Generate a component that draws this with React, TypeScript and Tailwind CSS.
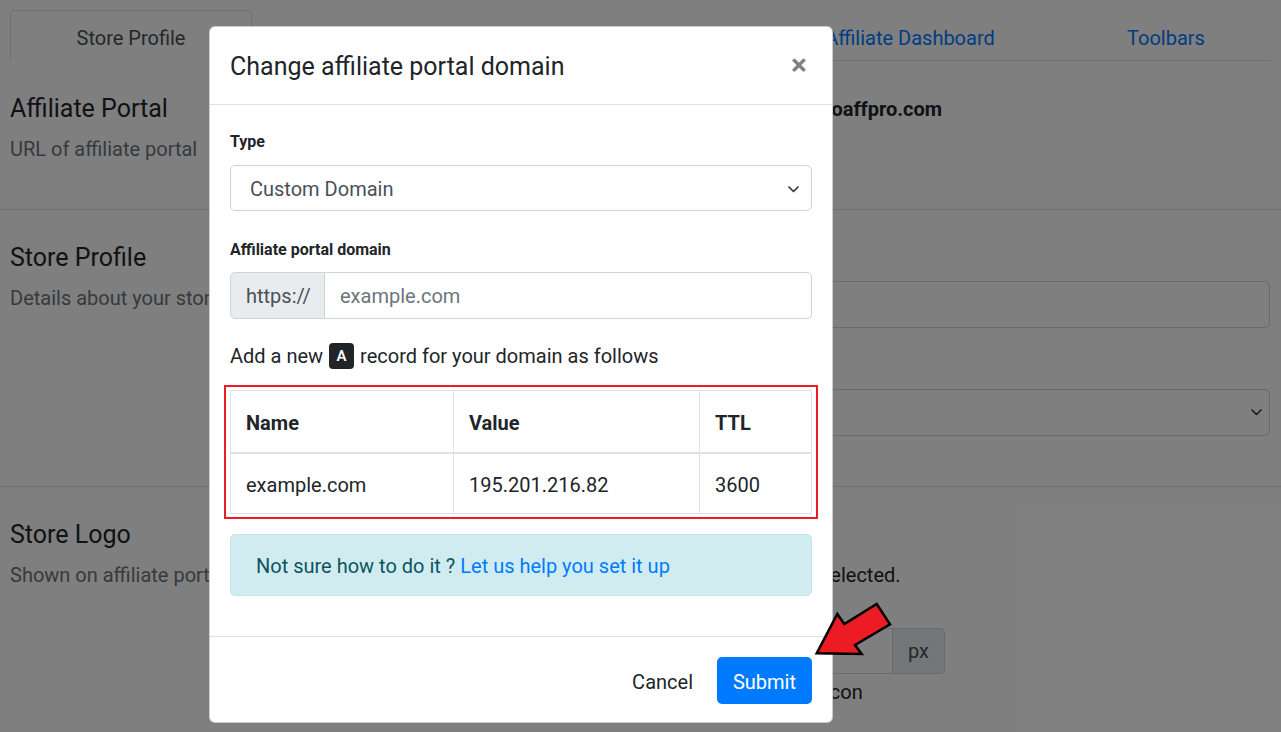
import React from 'react';

const ChevronDown = ({ className }: { className?: string }) => (
  <svg className={className} width="11" height="7" viewBox="0 0 11 7" fill="none">
    <path d="M1 1l4.5 4.5L10 1" stroke="#343a40" strokeWidth="1.7" strokeLinecap="round" strokeLinejoin="round" />
  </svg>
);

function BackgroundPage() {
  return (
    <div className="w-full text-[20px] text-[#212529]">
      {/* tabs */}
      <div className="pl-[10px] pr-[11px] pt-[10px]">
        <div className="flex h-[51px] border-b border-[#dee2e6]">
          <div className="-mb-px flex w-[242px] items-center justify-center rounded-t-[5px] border border-[#dee2e6] border-b-white bg-white pt-[5px] text-[#495057]">
            Store Profile
          </div>
          <div className="flex w-[262px] items-center justify-center pt-[5px] text-[#007bff]">Affiliate Portal</div>
          <div className="flex w-[268px] items-center justify-center pt-[5px] text-[#007bff]">Commissions</div>
          <div className="flex w-[256px] items-center justify-center pt-[5px] text-[#007bff]">Affiliate Dashboard</div>
          <div className="flex flex-1 items-center justify-center pl-[24px] pt-[5px] text-[#007bff]">Toolbars</div>
        </div>
      </div>

      {/* affiliate portal */}
      <div className="flex h-[149px] border-b border-[#dee2e6]">
        <div className="w-[820px] pl-[10px] pt-[33px]">
          <h5 className="mb-[10px] text-[25px] leading-[30px]">Affiliate Portal</h5>
          <p className="leading-[30px] text-[#6c757d]">URL of affiliate portal</p>
        </div>
        <div className="w-[450px] pt-[33px]">
          <div className="font-bold leading-[30px]">goaffpro.com</div>
        </div>
      </div>

      {/* store profile */}
      <div className="flex h-[277px] border-b border-[#dee2e6]">
        <div className="w-[820px] pl-[10px] pt-[33px]">
          <h5 className="mb-[10px] text-[25px] leading-[30px]">Store Profile</h5>
          <p className="leading-[30px] text-[#6c757d]">Details about your store</p>
        </div>
        <div className="w-[450px] pt-[71px]">
          <div className="h-[47px] rounded-[5px] border border-[#ced4da] bg-white" />
          <div className="mt-[61px] flex h-[47px] items-center justify-end rounded-[5px] border border-[#ced4da] bg-white pr-[7px]">
            <ChevronDown />
          </div>
        </div>
      </div>

      {/* store logo */}
      <div className="flex h-[245px]">
        <div className="w-[820px] pl-[10px] pt-[33px]">
          <h5 className="mb-[10px] text-[25px] leading-[30px]">Store Logo</h5>
          <p className="leading-[30px] text-[#6c757d]">Shown on affiliate portal</p>
        </div>
        <div className="w-[450px] pt-[73px]">
          <div className="leading-[30px]">selected.</div>
          <div className="mt-[38px] flex h-[46px]">
            <div className="w-[73px] rounded-l-[5px] border border-[#ced4da] bg-white" />
            <div className="flex w-[52px] items-center justify-center rounded-r-[5px] border border-l-0 border-[#ced4da] bg-[#e9ecef] text-[#495057]">
              px
            </div>
          </div>
          <div className="mt-[3px] pl-[5px] leading-[30px]">icon</div>
        </div>
      </div>
    </div>
  );
}

function DomainModal() {
  return (
    <div className="absolute left-[209px] top-[26px] w-[624px] rounded-[6px] border border-black/20 bg-white text-[20px] text-[#212529]">
      <div className="flex h-[78px] items-center justify-between border-b border-[#dee2e6] px-5 pt-[2px]">
        <h5 className="text-[25px] leading-[37px]">Change affiliate portal domain</h5>
        <span className="-mt-[4px] pr-[5px] text-[30px] font-bold leading-none text-black/50">×</span>
      </div>

      <div className="px-5 pb-[40px] pt-[25px]">
        <label className="mb-[11px] block text-[16px] font-bold leading-[24px]">Type</label>
        <div className="flex h-[46px] items-center justify-between rounded-[5px] border border-[#ced4da] pl-[19px] pr-[12px] pt-[2px] text-[#495057]">
          <span>Custom Domain</span>
          <ChevronDown />
        </div>

        <label className="mb-[10px] mt-[27px] block text-[16px] font-bold leading-[24px]">Affiliate portal domain</label>
        <div className="flex h-[47px]">
          <div className="flex w-[95px] items-center rounded-l-[5px] border border-[#ced4da] bg-[#e9ecef] pl-[15px] text-[#495057]">
            https://
          </div>
          <input
            className="flex-1 rounded-r-[5px] border border-l-0 border-[#ced4da] px-[15px] text-[#495057] outline-none placeholder:text-[#6c757d]"
            placeholder="example.com"
          />
        </div>

        <p className="mt-[22px] flex items-center leading-[30px]">
          Add a new
          <span className="mx-[6px] inline-flex h-[26px] w-[25px] items-center justify-center rounded-[4px] bg-[#212529] text-[15px] font-semibold text-white">
            A
          </span>
          record for your domain as follows
        </p>

        <div className="-mx-[6px] mt-[14px] border-2 border-[#ed1c24] px-[4px] py-[3px]">
          <table className="w-full border-collapse text-left">
            <thead>
              <tr className="h-[62px]">
                <th className="w-[223px] border border-b-2 border-[#dee2e6] px-[15px] pt-[4px] font-bold">Name</th>
                <th className="w-[246px] border border-b-2 border-[#dee2e6] px-[15px] pt-[4px] font-bold">Value</th>
                <th className="border border-b-2 border-[#dee2e6] px-[15px] pt-[4px] font-bold">TTL</th>
              </tr>
            </thead>
            <tbody>
              <tr className="h-[61px]">
                <td className="border border-[#dee2e6] px-[15px] pt-[3px]">example.com</td>
                <td className="border border-[#dee2e6] px-[15px] pt-[3px]">195.201.216.82</td>
                <td className="border border-[#dee2e6] px-[15px] pt-[3px]">3600</td>
              </tr>
            </tbody>
          </table>
        </div>

        <div className="mt-[15px] rounded-[5px] border border-[#bee5eb] bg-[#d1ecf1] px-[25px] pb-[14px] pt-[16px] leading-[30px] text-[#0c5460]">
          Not sure how to do it ? <span className="text-[#007bff]">Let us help you set it up</span>
        </div>
      </div>

      <div className="flex items-center justify-end gap-[12px] border-t border-[#dee2e6] px-5 pb-[18px] pt-5">
        <button className="h-[47px] px-[12px] pt-[2px] text-[#212529]">Cancel</button>
        <button className="h-[47px] w-[95px] rounded-[5px] bg-[#007bff] pt-[2px] text-white">Submit</button>
      </div>
    </div>
  );
}

export default function App() {
  return (
    <div className="relative h-[732px] w-[1281px] overflow-hidden bg-white font-['Roboto',sans-serif]">
      <BackgroundPage />
      <div className="absolute inset-0 bg-black/50" />
      <DomainModal />
      {/* annotation arrow */}
      <svg className="absolute left-[800px] top-[590px]" width="100" height="75" viewBox="0 0 100 75">
        <polygon
          points="16.7,63.3 37.3,24 44.3,34 76.7,14 90,34.3 55,55 61.7,64"
          fill="#ed1c24"
          stroke="#000"
          strokeWidth="2.5"
          strokeLinejoin="miter"
        />
      </svg>
    </div>
  );
}
